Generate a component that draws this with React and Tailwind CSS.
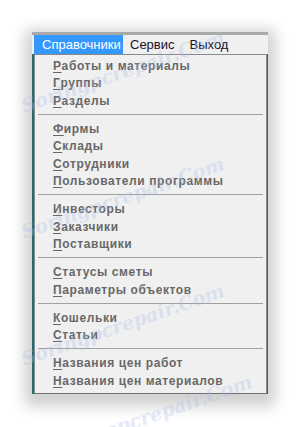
import React from "react";

const groups = [
  ["Работы и материалы", "Группы", "Разделы"],
  ["Фирмы", "Склады", "Сотрудники", "Пользователи программы"],
  ["Инвесторы", "Заказчики", "Поставщики"],
  ["Статусы сметы", "Параметры объектов"],
  ["Кошельки", "Статьи"],
  ["Названия цен работ", "Названия цен материалов"],
];

function Item({ text }) {
  return (
    <div className="h-[17.5px] flex items-center pl-[18px] text-[12px] font-bold tracking-[0.6px] text-[#686868] leading-none">
      <span className="underline underline-offset-2 decoration-1">{text[0]}</span>
      <span>{text.slice(1)}</span>
    </div>
  );
}

function Watermark({ className }) {
  return (
    <div
      className={
        "absolute pointer-events-none italic font-bold text-[19px] text-[#a9bbec] opacity-30 whitespace-nowrap -rotate-[19deg] origin-left " +
        className
      }
      style={{ fontFamily: "'DejaVu Serif', serif" }}
    >
      Soringpcrepair.Com
    </div>
  );
}

export default function App() {
  return (
    <div
      className="relative w-[300px] h-[427px] bg-white overflow-hidden pt-[32px] pl-[32px]"
      style={{ fontFamily: "'Liberation Sans', Arial, sans-serif" }}
    >
      <div className="w-[236px] flex flex-col shadow-[0_5px_14px_8px_rgba(0,0,0,0.18)] rounded-[2px]">
        <div className="h-[3px] bg-[#a9a9a9]" />
        <div className="h-[19px] bg-[#f0f0f0] flex items-stretch pl-[2px] text-[13px] leading-none">
          <div className="w-[89px] bg-[#3399ff] text-white flex items-center pl-[8px]">Справочники</div>
          <div className="flex items-center pl-[7px] text-[#1c0f25]">Сервис</div>
          <div className="flex items-center pl-[15px] text-[#1c0f25]">Выход</div>
        </div>
        <div className="flex bg-[#a0a0a0]">
          <div className="w-[2px] bg-[#1e6e78]" />
          <div className="w-[233px] bg-[#f0f0f0] border border-[#8a8a8a] border-b-[#707070] pt-[2px] pb-[3px]">
            {groups.map((g, gi) => (
              <div key={gi}>
                {gi > 0 && (
                  <div className="h-[10.5px] pt-[4px] px-[3px]">
                    <div className="h-px bg-[#a0a0a0]" />
                  </div>
                )}
                {g.map((t) => (
                  <Item key={t} text={t} />
                ))}
              </div>
            ))}
          </div>
          <div className="w-px bg-[#1e6e78]" />
        </div>
      </div>
      <Watermark className="left-[22px] top-[92px]" />
      <Watermark className="left-[22px] top-[218px]" />
      <Watermark className="left-[22px] top-[345px]" />
      <Watermark className="left-[50px] top-[436px]" />
    </div>
  );
}
